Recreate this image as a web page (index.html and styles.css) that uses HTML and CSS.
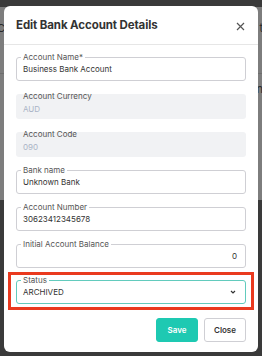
FILE: index.html
```html
<!DOCTYPE html>
<html lang="en">
<head>
    <meta charset="UTF-8">
    <meta name="viewport" content="width=device-width, initial-scale=1.0">
    <title>Edit Bank Account Details</title>
    <link rel="stylesheet" href="styles.css">
</head>
<body>
    <!-- page behind the modal, dimmed -->
    <div class="backdrop">
        <div class="backdrop-top"></div>
        <div class="backdrop-panel">
            <div class="backdrop-row"><span>C</span><span>t</span></div>
            <div class="backdrop-row"><span></span><span>n</span></div>
        </div>
        <div class="backdrop-rest"></div>
    </div>

    <div class="modal">
        <div class="modal-header">
            <h2>Edit Bank Account Details</h2>
            <svg class="close-icon" width="9" height="9" viewBox="0 0 9 9">
                <path d="M1 1 L8 8 M8 1 L1 8" stroke="#555" stroke-width="1.2" fill="none"/>
            </svg>
        </div>

        <div class="modal-body">
            <fieldset class="field">
                <legend>Account Name*</legend>
                <div class="value">Business Bank Account</div>
            </fieldset>

            <div class="field-filled">
                <div class="filled-label">Account Currency</div>
                <div class="filled-value">AUD</div>
            </div>

            <div class="field-filled">
                <div class="filled-label">Account Code</div>
                <div class="filled-value">090</div>
            </div>

            <fieldset class="field">
                <legend>Bank name</legend>
                <div class="value">Unknown Bank</div>
            </fieldset>

            <fieldset class="field">
                <legend>Account Number</legend>
                <div class="value">30623412345678</div>
            </fieldset>

            <fieldset class="field">
                <legend>Initial Account Balance</legend>
                <div class="value right">0</div>
            </fieldset>

            <div class="highlight">
                <fieldset class="field status">
                    <legend>Status</legend>
                    <div class="value select">
                        <span>ARCHIVED</span>
                        <svg width="6" height="4" viewBox="0 0 6 4">
                            <path d="M1 1 L3 3 L5 1" stroke="#333" stroke-width="1.2" fill="none"/>
                        </svg>
                    </div>
                </fieldset>
            </div>

            <div class="actions">
                <button class="btn btn-save">Save</button>
                <button class="btn btn-close">Close</button>
            </div>
        </div>
    </div>
</body>
</html>
```

FILE: styles.css
```css
body {
    margin: 0;
    font-family: 'Inter', 'Liberation Sans', sans-serif;
    background-color: #3a3a3a;
    width: 262px;
    height: 356px;
    overflow: hidden;
}
.backdrop {
    display: flex;
    flex-direction: column;
    height: 356px;
}
.backdrop-top {
    height: 7px;
    background-color: #3a3a3a;
}
.backdrop-panel {
    height: 193px;
    background-color: #7d7d7d;
    padding-top: 14px;
    box-sizing: border-box;
}
.backdrop-row {
    display: flex;
    justify-content: space-between;
    font-size: 11px;
    color: #2a2a2a;
    height: 37px;
    margin-left: -3px;
    margin-right: -1px;
}
.backdrop-row:first-child {
    border-bottom: 1px solid #6e6e6e;
    height: 52px;
    margin-bottom: 8px;
}
.backdrop-rest {
    flex: 1;
    background-color: #3a3a3a;
}

.modal {
    position: fixed;
    top: 6px;
    left: 4px;
    width: 254px;
    height: 346px;
    background-color: #fff;
    border-radius: 6px;
}
.modal-header {
    display: flex;
    justify-content: space-between;
    align-items: center;
    height: 38px;
    padding: 0 12px;
    border-bottom: 1px solid #e6e6e6;
}
.modal-header h2 {
    margin: 0;
    font-size: 11.5px;
    font-weight: 700;
    color: #333;
    letter-spacing: -0.1px;
}
.close-icon {
    margin-right: 1px;
    margin-top: 2px;
}
.modal-body {
    padding: 7px 12px 0;
    display: flex;
    flex-direction: column;
    gap: 8px;
}

.field {
    margin: 0;
    padding: 0 6px;
    border: 1px solid #cfcfd4;
    border-radius: 3px;
    height: 29px;
    box-sizing: border-box;
}
.field legend {
    font-size: 8px;
    line-height: 10px;
    color: #555;
    padding: 0 2px;
    margin-left: -2px;
}
.value {
    font-size: 8px;
    color: #333;
    line-height: 12px;
    padding-top: 1px;
}
.value.right {
    text-align: right;
    padding-right: 2px;
}
.value.select {
    display: flex;
    justify-content: space-between;
    align-items: center;
    padding-right: 3px;
}

.field-filled {
    background-color: #f1f2f4;
    border-radius: 3px;
    height: 25px;
    padding: 0 7px;
    margin-top: 5px;
}
.filled-label {
    font-size: 8px;
    color: #555;
    line-height: 10px;
    margin-top: -3px;
}
.filled-value {
    font-size: 8px;
    color: #aab4c6;
    line-height: 12px;
    margin-top: 2px;
}

.highlight {
    border: 3px solid #ea3a1f;
    margin: -4px -8px 0;
    padding: 0 5px 3px;
}
.status {
    border-color: #62cbbd;
}

.actions {
    display: flex;
    justify-content: flex-end;
    gap: 6px;
}
.btn {
    font-family: 'Inter', 'Liberation Sans', sans-serif;
    width: 42px;
    height: 24px;
    border-radius: 3px;
    font-size: 8px;
    font-weight: 600;
    cursor: pointer;
}
.btn-save {
    background-color: #1ec9b2;
    border: 1px solid #1ec9b2;
    color: #fff;
}
.btn-close {
    background-color: #fff;
    border: 1px solid #cfcfd4;
    color: #333;
}
```
